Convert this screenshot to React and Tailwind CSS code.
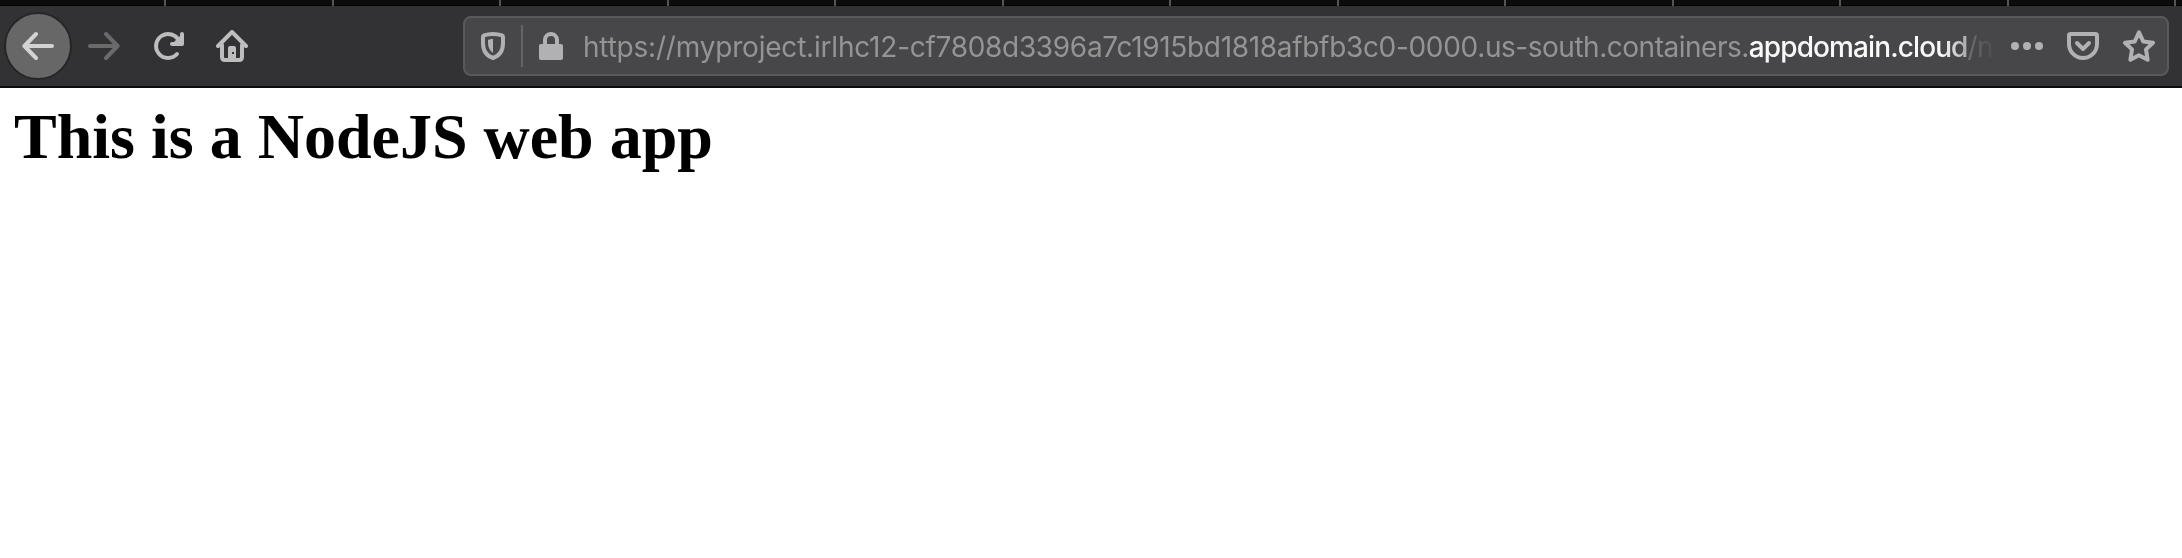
import React from "react";

const separators = Array.from({ length: 13 }, (_, i) => i);

function BackIcon() {
  return (
    <svg width="32" height="32" viewBox="0 0 32 32" fill="none" stroke="currentColor" strokeWidth="4" strokeLinecap="round" strokeLinejoin="round">
      <path d="M30 16H3M14 4L2.400 16L14 28" />
    </svg>
  );
}

function ForwardIcon() {
  return (
    <svg width="32" height="32" viewBox="0 0 32 32" fill="none" stroke="currentColor" strokeWidth="4" strokeLinecap="round" strokeLinejoin="round">
      <path d="M2 16H29M18 4L29.600 16L18 28" />
    </svg>
  );
}

function ReloadIcon() {
  return (
    <svg width="32" height="32" viewBox="0 0 32 32" fill="none" stroke="currentColor" strokeWidth="4" strokeLinecap="round" strokeLinejoin="round">
      <path d="M25 24A12 12 0 1 1 27 11" />
      <path d="M30 4V14H20Z" fill="currentColor" strokeWidth="0" />
      <path d="M30 4V14H20" />
    </svg>
  );
}

function HomeIcon() {
  return (
    <svg width="32" height="32" viewBox="0 0 32 32" fill="none" stroke="currentColor" strokeWidth="4" strokeLinecap="round" strokeLinejoin="round">
      <path d="M2 16L16 2L30 16" />
      <path d="M6 15V27Q6 30 9 30H23Q26 30 26 27V15" />
      <path d="M12 30V18Q12 16 14 16H18Q20 16 20 18V30ZM16 22V24H18V22Z" fill="currentColor" fillRule="evenodd" stroke="none" />
    </svg>
  );
}

function ShieldIcon() {
  return (
    <svg width="26" height="30" viewBox="0 0 26 30" fill="none">
      <path d="M13 3C9.5 3 6.5 3.5 4 4.4Q3 4.800 3 6V12C3 20 7 25 13 27C19 25 23 20 23 12V6Q23 4.800 22 4.400C19.500 3.500 16.500 3 13 3Z" stroke="currentColor" strokeWidth="4" strokeLinejoin="round" />
      <path d="M13 8V22C9.500 19.500 8 16 8 12V9C9.500 8.400 11 8.100 13 8Z" fill="currentColor" />
    </svg>
  );
}

function LockIcon() {
  return (
    <svg width="24" height="28" viewBox="0 0 24 28" fill="none">
      <path d="M6 14V8A6 6 0 0 1 18 8V14" stroke="currentColor" strokeWidth="4" />
      <rect y="12" width="24" height="16" rx="2" fill="currentColor" />
    </svg>
  );
}

function MoreIcon() {
  return (
    <svg width="32" height="8" viewBox="0 0 32 8" fill="currentColor">
      <circle cx="4" cy="4" r="4" />
      <circle cx="16" cy="4" r="4" />
      <circle cx="28" cy="4" r="4" />
    </svg>
  );
}

function PocketIcon() {
  return (
    <svg width="32" height="28" viewBox="0 0 32 28" fill="none" stroke="currentColor" strokeWidth="4" strokeLinecap="round" strokeLinejoin="round">
      <path d="M3.500 2H28.500Q30 2 30 3.500V12A14 14 0 0 1 2 12V3.500Q2 2 3.500 2Z" />
      <path d="M10 11L16 17L22 11" />
    </svg>
  );
}

function StarIcon() {
  return (
    <svg width="32" height="32" viewBox="0 0 32 32" fill="none" stroke="currentColor" strokeWidth="4" strokeLinecap="round" strokeLinejoin="round">
      <path d="M16 2.400L20.200 11.400L30 12.800L23 19.400L24.600 29.800L16 25.200L7.400 29.800L9 19.400L2 12.800L11.800 11.400Z" />
    </svg>
  );
}

export default function App() {
  return (
    <div className="flex h-[558px] w-full flex-col overflow-hidden bg-white">
      <div className="flex h-1.5 shrink-0 overflow-hidden bg-[linear-gradient(#0c0c0d_5px,#000_5px)]">
        {separators.map((i) => (
          <div key={i} className={i === 0 ? "w-[166px] shrink-0 border-r-2 border-[#545455]" : "w-[167.5px] shrink-0 border-r-2 border-[#545455]"} />
        ))}
      </div>
      <header className="flex h-[82px] shrink-0 items-center border-b-2 border-[#0c0c0d] bg-[#323234]">
        <button className="ml-1 flex size-[68px] shrink-0 items-center justify-center rounded-full border-2 border-[#262627] bg-[#676768] text-[#d3d3d3]">
          <BackIcon />
        </button>
        <span className="ml-4 text-[#6a6a6b]"><ForwardIcon /></span>
        <span className="ml-8 text-[#bdbdbd]"><ReloadIcon /></span>
        <span className="ml-8 text-[#bdbdbd]"><HomeIcon /></span>
        <div className="ml-[215px] flex h-[60px] w-[1706px] shrink-0 items-center rounded-lg border-2 border-[#59595b] bg-[#474749] text-[#b1b1b3]">
          <span className="ml-[15px]"><ShieldIcon /></span>
          <span className="ml-[15px] h-[42px] w-0.5 bg-[#5f6670]" />
          <span className="ml-4"><LockIcon /></span>
          <div className="ml-5 w-[1428px] whitespace-nowrap pt-0.5 font-['Inter',sans-serif] text-[28px] leading-9 text-[#949495] [mask-image:linear-gradient(to_right,black_1360px,transparent_1414px)]">
            <span className="tracking-[-0.2px]">https://myproject.irlhc12-</span>
            <span className="tracking-[-0.32px]">cf7808d3396a7c1915bd1818afbfb3c0-0000.</span>
            <span className="tracking-[-0.48px]">us-south.containers.</span>
            <span className="font-medium tracking-[-0.9px] text-[#f9f9fa]">appdomain.cloud</span>
            <span className="tracking-[-0.5px]">/no</span>
          </div>
          <span><MoreIcon /></span>
          <span className="ml-6"><PocketIcon /></span>
          <span className="ml-6"><StarIcon /></span>
        </div>
      </header>
      <main className="px-3.5 pt-3">
        <h1 className="font-['Liberation_Serif',serif] text-[64px] font-bold leading-[73px] text-black">This is a NodeJS web app</h1>
      </main>
    </div>
  );
}
